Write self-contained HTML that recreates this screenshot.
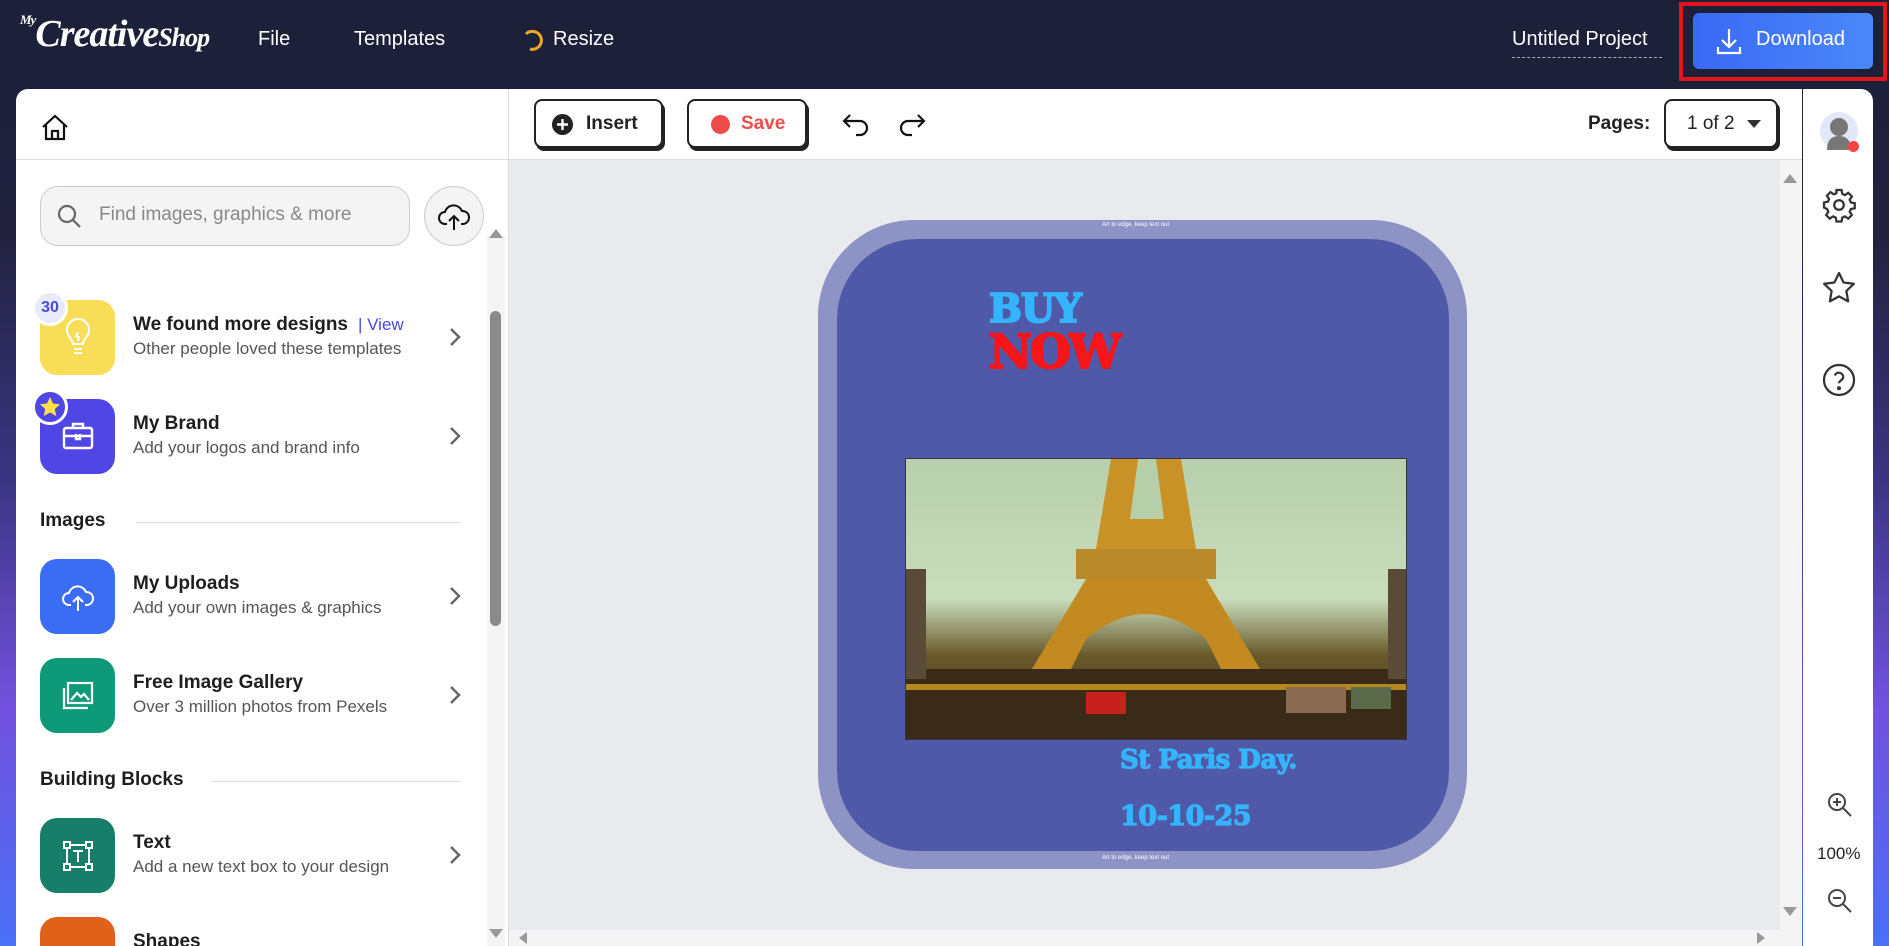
<!DOCTYPE html>
<html><head><meta charset="utf-8"><style>
*{box-sizing:border-box;margin:0;padding:0}
body{width:1889px;height:946px;overflow:hidden;font-family:"Liberation Sans",sans-serif;background:linear-gradient(180deg,#1c1f3a 0%,#22223f 25%,#3a3480 50%,#7252de 75%,#4a70f6 100%);position:relative}
.top{position:absolute;left:0;top:0;width:1889px;height:89px;background:#1d2039}
.abs{position:absolute}
.menu{color:#fff;font-size:20px;top:28px}
.panel{position:absolute;left:16px;top:89px;width:1786px;height:857px;background:#fff;border-radius:12px 0 0 0;overflow:hidden}
.side{position:absolute;left:1803px;top:89px;width:70px;height:857px;background:#fff;border-radius:0 12px 0 0}
.item{position:absolute;left:24px;width:460px;height:75px}
.ic{position:absolute;left:0;top:0;width:75px;height:75px;border-radius:17px}
.t{position:absolute;left:93px;top:14px;font-size:19px;font-weight:bold;color:#1e1e1e}
.s{position:absolute;left:93px;top:39px;font-size:17px;color:#555}
.chev{position:absolute;left:408px;top:26px}
.sec{position:absolute;left:24px;font-size:19px;font-weight:bold;color:#1e1e1e}
.btn{position:absolute;top:10px;height:49px;border:2px solid #222;border-radius:8px;box-shadow:2px 3px 0 #222;background:#fff;font-weight:bold;font-size:19px}
.slab{font-family:'DejaVu Serif',serif;font-weight:bold;-webkit-text-stroke:2px currentColor}
</style></head><body>
<div class="top"></div>
<div class="abs" style="left:20px;top:12px;color:#fff;font-family:'Liberation Serif',serif;font-style:italic;font-weight:bold;font-size:38px;letter-spacing:-1px"><span style="font-size:13px;vertical-align:top">My</span>Creative<span style="font-size:26px">Shop</span></div>
<div class="abs menu" style="left:258px">File</div>
<div class="abs menu" style="left:354px">Templates</div>
<svg class="abs" style="left:522px;top:30px" width="22" height="22" viewBox="0 0 22 22"><path d="M4 4 A9 9 0 1 1 8 19" fill="none" stroke="#f2a81d" stroke-width="3"/></svg>
<div class="abs menu" style="left:553px">Resize</div>
<div class="abs" style="left:1512px;top:28px;color:#fff;font-size:20px;border-bottom:1px dashed #aaa;padding-bottom:6px;width:150px">Untitled Project</div>
<div class="abs" style="left:1679px;top:2px;width:208px;height:79px;border:4px solid #e3151b"></div>
<div class="abs" style="left:1693px;top:13px;width:180px;height:56px;border-radius:6px;background:linear-gradient(90deg,#3a69f5,#4b88f9)">
<svg class="abs" style="left:22px;top:14px" width="28" height="28" viewBox="0 0 28 28" fill="none" stroke="#fff" stroke-width="2.2"><path d="M14 2v18M7 13l7 7 7-7M3 20v6h22v-6"/></svg>
<div class="abs" style="left:63px;top:15px;color:#fff;font-size:20px">Download</div></div>

<div class="panel">
<div class="abs" style="left:0;top:70px;width:1786px;height:1px;background:#ddd"></div>
<div class="abs" style="left:492px;top:0;width:1px;height:857px;background:#ddd"></div>
<svg class="abs" style="left:24px;top:23px" width="30" height="30" viewBox="0 0 30 30" fill="none" stroke="#111" stroke-width="2.2"><path d="M3 15L15 4l12 11M6 12v15h18V12M12 27v-8h6v8"/></svg>
<div class="abs" style="left:24px;top:97px;width:370px;height:60px;border:1px solid #ccc;border-radius:18px;background:#f4f4f4"></div>
<svg class="abs" style="left:40px;top:114px" width="28" height="28" viewBox="0 0 28 28" fill="none" stroke="#666" stroke-width="2.2"><circle cx="11" cy="11" r="8"/><path d="M17 17l7 7"/></svg>
<div class="abs" style="left:83px;top:115px;font-size:19px;color:#888">Find images, graphics &amp; more</div>
<div class="abs" style="left:408px;top:97px;width:60px;height:60px;border:1px solid #ccc;border-radius:50%;background:#f4f4f4"></div>
<svg class="abs" style="left:421px;top:111px" width="34" height="32" viewBox="0 0 34 32" fill="none" stroke="#111" stroke-width="2"><path d="M10 24H8a6 6 0 0 1 0-12 9 9 0 0 1 17-1 6.5 6.5 0 0 1 1 13h-2M17 30V16M12 21l5-5 5 5"/></svg>
<div class="abs" style="left:471px;top:147px;width:18px;height:710px;background:#f4f4f4"></div>
<div class="abs" style="left:474px;top:222px;width:11px;height:315px;border-radius:6px;background:#8a8a8a"></div>
<div class="abs" style="left:473px;top:140px;width:0;height:0;border:7px solid transparent;border-bottom:9px solid #999;border-top:0"></div>
<div class="abs" style="left:473px;top:840px;width:0;height:0;border:7px solid transparent;border-top:9px solid #999;border-bottom:0"></div>

<div class="item" style="top:211px"><div class="ic" style="background:#f7dd58"></div>
<svg class="abs" style="left:25px;top:18px" width="26" height="40" viewBox="0 0 26 40" fill="none" stroke="#fff" stroke-width="2"><path d="M8 26c0-5-6-7-6-14a11 11 0 0 1 22 0c0 7-6 9-6 14zM9 31h8M9 35h8M13 14l-2 4 3 1-1 4"/></svg>
<div class="abs" style="left:-8px;top:-10px;width:36px;height:36px;border-radius:50%;background:#e8ebfb;border:3px solid #fff;color:#4a48d8;font-weight:bold;font-size:16px;text-align:center;line-height:30px">30</div>
<div class="t">We found more designs <span style="color:#4b47e0;font-weight:normal;font-size:17px">&nbsp;| View</span></div><div class="s">Other people loved these templates</div>
<svg class="chev" width="14" height="22" viewBox="0 0 14 22" fill="none" stroke="#666" stroke-width="2.5"><path d="M3 3l8 8-8 8"/></svg></div>

<div class="item" style="top:310px"><div class="ic" style="background:#4f46e5"></div>
<svg class="abs" style="left:22px;top:22px" width="32" height="30" viewBox="0 0 32 30" fill="none" stroke="#fff" stroke-width="2.4"><rect x="2" y="7" width="28" height="20" rx="2"/><path d="M11 7V3h10v4M2 15h28M14 13v5h4v-5"/></svg>
<div class="abs" style="left:-8px;top:-10px;width:36px;height:36px;border-radius:50%;background:#4f46e5;border:3px solid #fff"><svg width="30" height="30" viewBox="0 0 30 30"><path d="M15 5l3 6.5 7 .8-5.2 4.8 1.5 7L15 20.5 8.7 24l1.5-7L5 12.3l7-.8z" fill="#fde047"/></svg></div>
<div class="t">My Brand</div><div class="s">Add your logos and brand info</div>
<svg class="chev" width="14" height="22" viewBox="0 0 14 22" fill="none" stroke="#666" stroke-width="2.5"><path d="M3 3l8 8-8 8"/></svg></div>

<div class="sec" style="top:421px">Images</div>
<div class="abs" style="left:120px;top:433px;width:325px;height:1px;background:#ddd"></div>

<div class="item" style="top:470px"><div class="ic" style="background:#3a6cf4"></div>
<svg class="abs" style="left:21px;top:22px" width="34" height="32" viewBox="0 0 34 32" fill="none" stroke="#fff" stroke-width="2"><path d="M10 24H8a6 6 0 0 1 0-12 9 9 0 0 1 17-1 6.5 6.5 0 0 1 1 13h-2M17 30V16M12 21l5-5 5 5"/></svg>
<div class="t">My Uploads</div><div class="s">Add your own images &amp; graphics</div>
<svg class="chev" width="14" height="22" viewBox="0 0 14 22" fill="none" stroke="#666" stroke-width="2.5"><path d="M3 3l8 8-8 8"/></svg></div>

<div class="item" style="top:569px"><div class="ic" style="background:#0e9a78"></div>
<svg class="abs" style="left:22px;top:23px" width="32" height="30" viewBox="0 0 32 30" fill="none" stroke="#fff" stroke-width="2.2"><rect x="6" y="2" width="24" height="20"/><path d="M2 7v20h24M9 19l6-7 4 4 3-3 5 6"/></svg>
<div class="t">Free Image Gallery</div><div class="s">Over 3 million photos from Pexels</div>
<svg class="chev" width="14" height="22" viewBox="0 0 14 22" fill="none" stroke="#666" stroke-width="2.5"><path d="M3 3l8 8-8 8"/></svg></div>

<div class="sec" style="top:680px">Building Blocks</div>
<div class="abs" style="left:195px;top:692px;width:250px;height:1px;background:#ddd"></div>

<div class="item" style="top:729px"><div class="ic" style="background:#177e69"></div>
<svg class="abs" style="left:22px;top:22px" width="32" height="32" viewBox="0 0 32 32" fill="none" stroke="#fff" stroke-width="2"><rect x="5" y="5" width="22" height="22"/><rect x="2" y="2" width="6" height="6" fill="#177e69"/><rect x="24" y="2" width="6" height="6" fill="#177e69"/><rect x="2" y="24" width="6" height="6" fill="#177e69"/><rect x="24" y="24" width="6" height="6" fill="#177e69"/><path d="M11 11h10M16 11v11"/></svg>
<div class="t">Text</div><div class="s">Add a new text box to your design</div>
<svg class="chev" width="14" height="22" viewBox="0 0 14 22" fill="none" stroke="#666" stroke-width="2.5"><path d="M3 3l8 8-8 8"/></svg></div>

<div class="item" style="top:828px"><div class="ic" style="background:#e0621a"></div>
<div class="t">Shapes</div></div>

<!-- toolbar -->
<div class="btn" style="left:518px;width:129px"><svg class="abs" style="left:16px;top:13px" width="21" height="21" viewBox="0 0 21 21"><circle cx="10.5" cy="10.5" r="10.5" fill="#222"/><path d="M10.5 5v11M5 10.5h11" stroke="#fff" stroke-width="2.4"/></svg><span class="abs" style="left:50px;top:12px;color:#222">Insert</span></div>
<div class="btn" style="left:671px;width:120px"><span class="abs" style="left:22px;top:14px;width:19px;height:19px;border-radius:50%;background:#f04b4b"></span><span class="abs" style="left:52px;top:12px;color:#f04b4b">Save</span></div>
<svg class="abs" style="left:825px;top:22px" width="30" height="26" viewBox="0 0 30 26" fill="none" stroke="#111" stroke-width="2.2"><path d="M9 4L3 10l6 6M3 10h16a7 7 0 0 1 0 14h-4"/></svg>
<svg class="abs" style="left:881px;top:22px" width="30" height="26" viewBox="0 0 30 26" fill="none" stroke="#111" stroke-width="2.2"><path d="M21 4l6 6-6 6M27 10H11a7 7 0 0 0 0 14h4"/></svg>
<div class="abs" style="left:1572px;top:24px;font-size:19px;font-weight:bold;color:#222">Pages:</div>
<div class="btn" style="left:1648px;width:114px;font-weight:normal"><span class="abs" style="left:21px;top:12px;color:#222;font-size:19px">1 of 2</span><span class="abs" style="left:81px;top:19px;border:7px solid transparent;border-top:8px solid #333;border-bottom:0"></span></div>

<!-- canvas -->
<div class="abs" style="left:493px;top:71px;width:1293px;height:770px;background:#e9eaee"></div>
<div class="abs" style="left:493px;top:841px;width:1293px;height:16px;background:#f4f4f4"></div>
<div class="abs" style="left:1764px;top:71px;width:22px;height:770px;background:#f4f4f4"></div>
<div class="abs" style="left:1767px;top:85px;border:7px solid transparent;border-bottom:9px solid #999;border-top:0"></div>
<div class="abs" style="left:1767px;top:818px;border:7px solid transparent;border-top:9px solid #999;border-bottom:0"></div>
<div class="abs" style="left:503px;top:843px;border:6px solid transparent;border-right:8px solid #999;border-left:0"></div>
<div class="abs" style="left:1741px;top:843px;border:6px solid transparent;border-left:8px solid #999;border-right:0"></div>

<div class="abs" style="left:802px;top:131px;width:649px;height:649px;border-radius:96px;background:#8e93c6"></div>
<div class="abs" style="left:821px;top:150px;width:612px;height:612px;border-radius:80px;background:#5059a8"></div>
<div class="abs" style="left:1086px;top:133px;font-size:6px;color:#fff">Art to edge, keep text out</div>
<div class="abs" style="left:1086px;top:766px;font-size:6px;color:#fff">Art to edge, keep text out</div>
<div class="abs slab" style="left:973px;top:197px;font-size:39px;color:#35b4fb;letter-spacing:-1px">BUY</div>
<div class="abs slab" style="left:973px;top:236px;font-size:47px;color:#f8151a;letter-spacing:-2px">NOW</div>
<div class="abs" style="left:889px;top:369px;width:502px;height:282px;overflow:hidden;background:linear-gradient(180deg,#b8d0ac 0%,#c9dcbb 50%,#6a5a2a 70%,#3a2a14 100%);border:1px solid #334">
<svg width="502" height="282" viewBox="0 0 502 282"><path d="M205 0h70l15 90h-100z" fill="#c99226"/><path d="M232 0h18l8 60h-34z" fill="#b7cfa9"/><path d="M170 90h140v30h-140z" fill="#b98a2a"/><path d="M120 220L180 120h120l60 100h-40l-20-40q-60-50-120 0l-20 40z" fill="#c28a20"/><rect x="0" y="210" width="502" height="72" fill="#3a2a18"/><rect x="0" y="225" width="502" height="6" fill="#e8b020" opacity=".7"/><rect x="180" y="233" width="40" height="22" fill="#c8201c"/><rect x="380" y="228" width="60" height="26" fill="#8a6a50"/><rect x="445" y="228" width="40" height="22" fill="#5a6a4a"/><rect x="0" y="110" width="20" height="110" fill="#5a4a38"/><rect x="482" y="110" width="20" height="110" fill="#5a4a38"/></svg></div>
<div class="abs slab" style="left:1104px;top:656px;font-size:26px;color:#35b4fb;letter-spacing:-0.5px;-webkit-text-stroke:1.2px #35b4fb">St Paris Day.</div>
<div class="abs slab" style="left:1104px;top:712px;font-size:27px;color:#35b4fb;letter-spacing:-0.5px;-webkit-text-stroke:1.2px #35b4fb">10-10-25</div>
</div>

<div class="side">
<div class="abs" style="left:17px;top:23px;width:38px;height:38px;border-radius:50%;background:#e2e8f7"><svg width="38" height="38" viewBox="0 0 38 38"><circle cx="19" cy="15" r="9" fill="#777"/><path d="M7 38q0-14 12-14t12 14z" fill="#777"/></svg></div>
<div class="abs" style="left:45px;top:52px;width:11px;height:11px;border-radius:50%;background:#f44"></div>
<svg class="abs" style="left:18px;top:98px" width="36" height="36" viewBox="0 0 24 24" fill="none" stroke="#333" stroke-width="1.5"><circle cx="12" cy="12" r="3.2"/><path d="M10.3 2h3.4l.5 2.6 1.8.8 2.2-1.5 2.4 2.4-1.5 2.2.8 1.8 2.6.5v3.4l-2.6.5-.8 1.8 1.5 2.2-2.4 2.4-2.2-1.5-1.8.8-.5 2.6h-3.4l-.5-2.6-1.8-.8-2.2 1.5-2.4-2.4 1.5-2.2-.8-1.8L2 13.7v-3.4l2.6-.5.8-1.8-1.5-2.2 2.4-2.4 2.2 1.5 1.8-.8z"/></svg>
<svg class="abs" style="left:18px;top:181px" width="36" height="36" viewBox="0 0 24 24" fill="none" stroke="#333" stroke-width="1.5" stroke-linejoin="round"><path d="M12 2l3 6.3 6.9.9-5 4.8 1.2 6.9L12 17.6l-6.1 3.3L7.1 14l-5-4.8 6.9-.9z"/></svg>
<svg class="abs" style="left:18px;top:273px" width="36" height="36" viewBox="0 0 24 24" fill="none" stroke="#333" stroke-width="1.5"><circle cx="12" cy="12" r="10"/><path d="M9.2 9a2.9 2.9 0 0 1 5.6 1c0 2-2.8 2.4-2.8 4.2"/><circle cx="12" cy="17.5" r=".6" fill="#333"/></svg>
<svg class="abs" style="left:24px;top:703px" width="26" height="26" viewBox="0 0 26 26" fill="none" stroke="#444" stroke-width="2"><circle cx="10" cy="10" r="8"/><path d="M16 16l8 8M10 6v8M6 10h8"/></svg>
<div class="abs" style="left:14px;top:755px;font-size:17px;color:#222">100%</div>
<svg class="abs" style="left:24px;top:799px" width="26" height="26" viewBox="0 0 26 26" fill="none" stroke="#444" stroke-width="2"><circle cx="10" cy="10" r="8"/><path d="M16 16l8 8M6 10h8"/></svg>
</div>
</body></html>
